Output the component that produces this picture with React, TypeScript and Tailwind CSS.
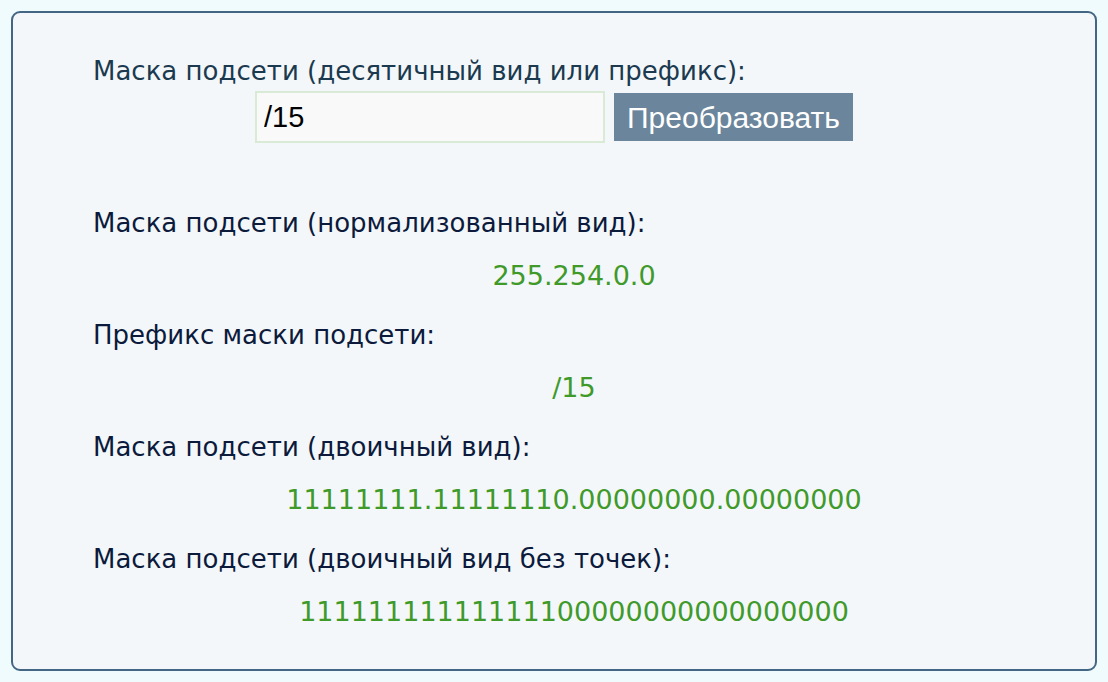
import React, { useState } from 'react'

const results = [
  { label: 'Маска подсети (нормализованный вид):', value: '255.254.0.0' },
  { label: 'Префикс маски подсети:', value: '/15' },
  { label: 'Маска подсети (двоичный вид):', value: '11111111.11111110.00000000.00000000' },
  { label: 'Маска подсети (двоичный вид без точек):', value: '11111111111111100000000000000000' },
]

const App: React.FC = () => {
  const [mask, setMask] = useState<string>('/15')

  return (
    <div className="min-h-[682px] w-[1108px] bg-[#f0fbfd] p-[11px] font-['DejaVu_Sans',sans-serif]">
      <div className="h-[660px] rounded-[9px] border-2 border-[#426683] bg-[#f3f7fa] pt-[42px]">
        <div className="pl-[80px] text-[26px] leading-[32px] text-[#1b3a4f]">
          Маска подсети (десятичный вид или префикс):
        </div>
        <div className="mt-[4px] flex items-center justify-center gap-[9px]">
          <input
            className="h-[52px] w-[350px] border-2 border-[#d9ead6] bg-[#f9f9f9] px-[7px] font-['Liberation_Sans',sans-serif] text-[29px] text-black outline-none"
            type="text"
            value={mask}
            onChange={(e) => setMask(e.target.value)}
          />
          <button
            className="h-[48px] w-[239px] bg-[#6b869c] font-['Liberation_Sans',sans-serif] text-[30px] text-white"
            type="button"
          >
            Преобразовать
          </button>
        </div>

        <div className="mt-[64px] w-[1042px] pl-[80px]">
          {results.map((r) => (
            <div key={r.label} className="mb-[27px]">
              <div className="text-[26px] leading-[32px] text-[#0c1a3c]">{r.label}</div>
              <div className="mt-[21px] text-center text-[27px] leading-[32px] text-[#3f9a2a]">
                {r.value}
              </div>
            </div>
          ))}
        </div>
      </div>
    </div>
  )
}

export default App
